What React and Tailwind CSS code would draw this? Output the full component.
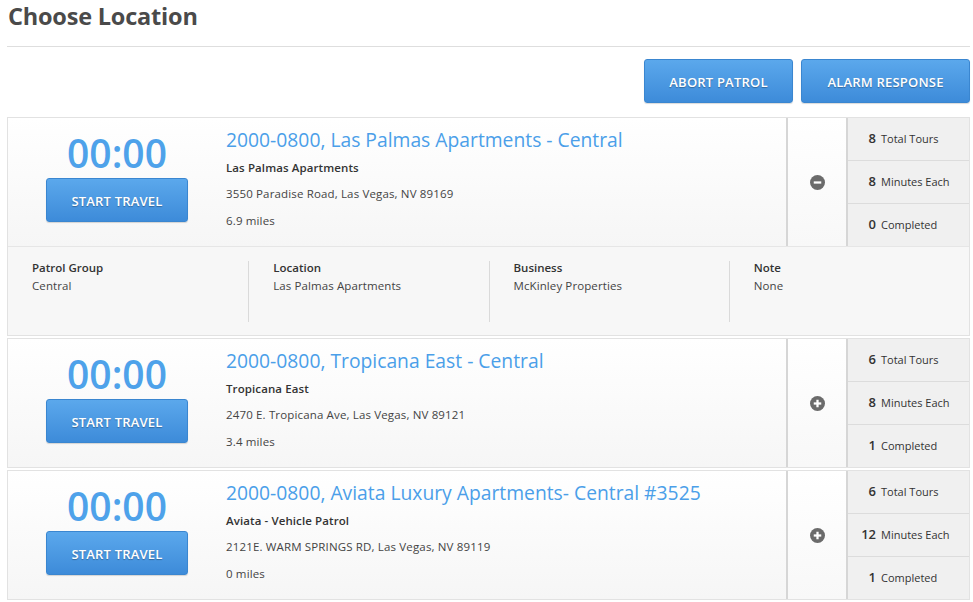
import React from 'react';

const locations = [
  {
    title: '2000-0800, Las Palmas Apartments - Central',
    name: 'Las Palmas Apartments',
    address: '3550 Paradise Road, Las Vegas, NV 89169',
    miles: '6.9 miles',
    tours: 8,
    minutes: 8,
    completed: 0,
    open: true,
    details: [
      ['Patrol Group', 'Central'],
      ['Location', 'Las Palmas Apartments'],
      ['Business', 'McKinley Properties'],
      ['Note', 'None'],
    ],
  },
  {
    title: '2000-0800, Tropicana East - Central',
    name: 'Tropicana East',
    address: '2470 E. Tropicana Ave, Las Vegas, NV 89121',
    miles: '3.4 miles',
    tours: 6,
    minutes: 8,
    completed: 1,
  },
  {
    title: '2000-0800, Aviata Luxury Apartments- Central #3525',
    name: 'Aviata - Vehicle Patrol',
    address: '2121E. WARM SPRINGS RD, Las Vegas, NV 89119',
    miles: '0 miles',
    tours: 6,
    minutes: 12,
    completed: 1,
  },
];

const blueBtn =
  'pt-[3px] rounded-[3px] border border-[#3a86d0] bg-gradient-to-b from-[#5ba8ec] to-[#3d8bd9] text-white text-[13px] font-semibold uppercase tracking-[0.2px] [text-shadow:0_1px_1px_rgba(0,0,0,0.3)] shadow-[0_1px_1px_rgba(0,0,0,0.15)]';

function ToggleIcon({ open }) {
  return (
    <svg width="15" height="15" viewBox="0 0 16 16">
      <circle cx="8" cy="8" r="8" fill="#6b6b6b" />
      <rect x="4" y="6.8" width="8" height="2.4" fill="#fff" />
      {!open && <rect x="6.8" y="4" width="2.4" height="8" fill="#fff" />}
    </svg>
  );
}

function LocationCard({ loc }) {
  return (
    <div className="border border-[#e2e2e2] mb-[2px]">
      <div className="flex h-[128px] bg-gradient-to-b from-white to-[#f6f6f6]">
        <div className="w-[218px] flex flex-col items-center pt-[15px]">
          <div className="text-[39px] leading-[40px] text-[#4ea2ea] font-semibold">00:00</div>
          <button className={`${blueBtn} mt-[5px] w-[142px] h-[44px]`}>Start Travel</button>
        </div>
        <div className="flex-1 pt-[10px]">
          <div className="text-[19.3px] leading-[24px] text-[#4b9fe9] font-medium">{loc.title}</div>
          <div className="mt-[7px] text-[11.5px] font-semibold text-[#333] tracking-[0.1px]">{loc.name}</div>
          <div className="mt-[9px] text-[11.5px] text-[#444] tracking-[0.15px]">{loc.address}</div>
          <div className="mt-[9px] text-[11.5px] text-[#444] tracking-[0.15px]">{loc.miles}</div>
        </div>
        <div className="w-[62px] border-x-2 border-[#d6d6d6] flex items-center justify-center bg-gradient-to-b from-white to-[#f8f8f8]">
          <ToggleIcon open={loc.open} />
        </div>
        <div className="w-[121px] flex flex-col bg-[#f0f0f0]">
          {[
            [loc.tours, 'Total Tours'],
            [loc.minutes, 'Minutes Each'],
            [loc.completed, 'Completed'],
          ].map(([n, label], i) => (
            <div
              key={label}
              className={`flex-1 flex items-center pl-[11px] text-[11px] text-[#333] ${i > 0 ? 'border-t border-[#dcdcdc]' : ''}`}
            >
              <span className="w-[22px] text-right pr-[5px] text-[13px] font-semibold">{n}</span>
              <span>{label}</span>
            </div>
          ))}
        </div>
      </div>
      {loc.details && (
        <div className="grid grid-cols-4 h-[89px] bg-[#f7f7f7] border-t border-[#e6e6e6] pt-[14px] pb-[13px]">
          {loc.details.map(([label, value], i) => (
            <div key={label} className={`pl-[24px] ${i > 0 ? 'border-l border-[#dadada]' : ''}`}>
              <div className="text-[11.5px] font-semibold text-[#333] leading-[14px]">{label}</div>
              <div className="text-[11.5px] text-[#444] leading-[14px] mt-[4px] tracking-[0.1px]">{value}</div>
            </div>
          ))}
        </div>
      )}
    </div>
  );
}

export default function App() {
  return (
    <div className="w-[973px] h-[602px] overflow-hidden bg-white pl-[7px] pr-[3px] font-['Open_Sans',sans-serif]">
      <h1 className="pt-[1px] pl-[1px] text-[23.5px] leading-[31px] font-bold text-[#4a4a4a] tracking-[-0.2px]">
        Choose Location
      </h1>
      <div className="mt-[14px] border-t border-[#dedede]"></div>
      <div className="flex justify-end gap-[8px] pt-[12px] pb-[14px]">
        <button className={`${blueBtn} w-[149px] h-[44px]`}>Abort Patrol</button>
        <button className={`${blueBtn} w-[169px] h-[44px]`}>Alarm Response</button>
      </div>
      <div>
        {locations.map((loc) => (
          <LocationCard key={loc.title} loc={loc} />
        ))}
      </div>
    </div>
  );
}
